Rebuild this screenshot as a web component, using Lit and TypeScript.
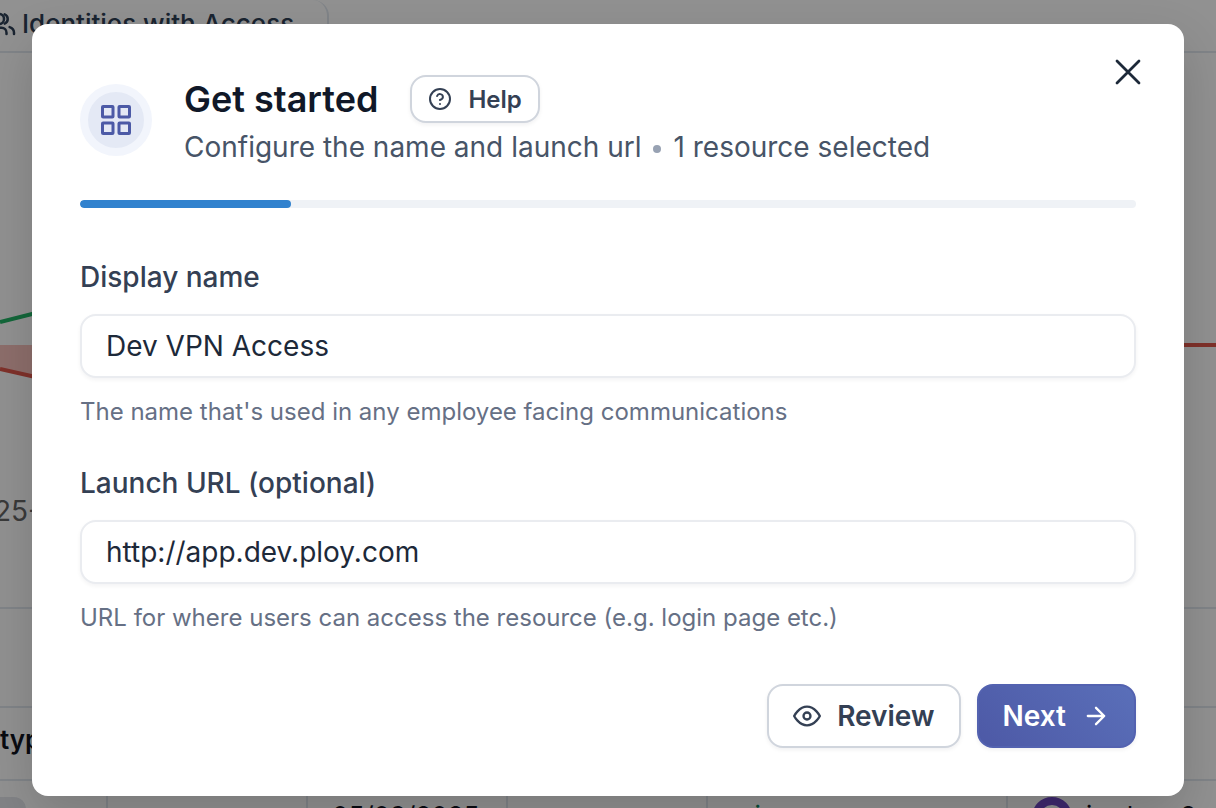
import { LitElement, html, css, svg } from "lit";
import { customElement, state } from "lit/decorators.js";

const icon = (body: unknown, size: number, stroke = 2) => html`<svg
  width=${size}
  height=${size}
  viewBox="0 0 24 24"
  fill="none"
  stroke="currentColor"
  stroke-width=${stroke}
  stroke-linecap="round"
  stroke-linejoin="round"
  overflow="visible"
  aria-hidden="true"
>${body}</svg>`;

const usersIcon = svg`<circle cx="12" cy="8" r="4"/><path d="M16.5 4.300a4 4 0 0 1 0 7.400"/><path d="M5 20v-1a4 4 0 0 1 4-4h5a4 4 0 0 1 4 4v1"/><path d="M20.5 14.500c2 .6 3.500 2.300 3.500 4.500v1"/>`;
const gridIcon = svg`<rect x="3" y="3" width="7" height="7" rx="0.4"/><rect x="14" y="3" width="7" height="7" rx="0.4"/><rect x="14" y="14" width="7" height="7" rx="0.4"/><rect x="3" y="14" width="7" height="7" rx="0.4"/>`;
const helpIcon = svg`<circle cx="12" cy="12" r="10"/><path d="M9.1 9a3 3 0 0 1 5.8 1c0 2-3 3-3 3"/><path d="M12 17h.01"/>`;
const closeIcon = svg`<path d="M18 6 6 18M6 6l12 12"/>`;
const eyeIcon = svg`<path d="M1 12s4-8 11-8 11 8 11 8-4 8-11 8-11-8-11-8z"/><circle cx="12" cy="12" r="3"/>`;
const arrowIcon = svg`<path d="M5 12h14M12 5l7 7-7 7"/>`;

@customElement("app-backdrop")
export class AppBackdrop extends LitElement {
  static styles = css`
    :host {
      display: flex;
      flex-direction: column;
      height: 100%;
      overflow: hidden;
      background: #fff;
      color: #2f4056;
    }
    .tabs {
      display: flex;
      flex: none;
      height: 53px;
      box-sizing: border-box;
      border-bottom: 2px solid #e2e8f0;
    }
    .tab {
      display: flex;
      align-items: center;
      gap: 8px;
      width: 329px;
      height: 51px;
      box-sizing: border-box;
      padding-bottom: 4px;
      border-right: 2px solid #e2e8f0;
      border-top-right-radius: 16px;
      font-size: 26px;
      font-weight: 500;
      white-space: nowrap;
    }
    .tab svg {
      flex: none;
      margin-left: -16px;
    }
    .chart {
      flex: none;
      height: 554px;
      display: flex;
      flex-direction: column;
      border-bottom: 2px solid #e2e8f0;
    }
    .plot {
      display: block;
      width: 100%;
      height: 436px;
    }
    .tick {
      margin-left: -6px;
      font-size: 28px;
      line-height: 44px;
      color: #666;
    }
    .filter {
      flex: none;
      height: 97px;
      border-bottom: 2px solid #e2e8f0;
    }
    .head {
      flex: none;
      height: 71px;
      line-height: 64px;
      border-bottom: 2px solid #e2e8f0;
      font-size: 26px;
      font-weight: 600;
      color: #10141f;
    }
    .row {
      flex: none;
      display: grid;
      grid-template-columns: 108px 200px 200px 200px 300px 1fr;
      height: 72px;
      font-size: 26px;
      line-height: 70px;
      color: #10141f;
    }
    .cell {
      display: flex;
      gap: 14px;
      padding-left: 24px;
      box-sizing: border-box;
      border-right: 2px solid #e2e8f0;
      white-space: nowrap;
    }
    .cell:first-child {
      padding: 0;
    }
    .cell:last-child {
      border: 0;
    }
    .chip {
      width: 26px;
      height: 40px;
      margin-top: 16px;
      border-radius: 0 12px 12px 0;
      background: #e4e7ec;
    }
    .state {
      margin-left: 8px;
      color: #0e8a63;
    }
    .avatar {
      width: 24px;
      height: 24px;
      margin-top: 16px;
      flex: none;
      border: 8px solid #7048c4;
      border-radius: 50%;
    }
  `;

  render() {
    return html`
      <div class="tabs">
        <div class="tab">${icon(usersIcon, 30)}<span>Identities with Access</span></div>
      </div>
      <div class="chart">
        <svg class="plot" viewBox="0 0 1216 436" preserveAspectRatio="none" aria-hidden="true">
          <path d="M0 292H1216L36 324 0 316z" fill="#f8c1bd" />
          <path d="M0 269 40 259" stroke="#22b566" stroke-width="4" fill="none" />
          <path d="M0 316 40 325M1170 292H1216" stroke="#e0564a" stroke-width="4" fill="none" />
        </svg>
        <div class="tick">25-</div>
      </div>
      <div class="filter"></div>
      <div class="head">type</div>
      <div class="row">
        <div class="cell"><span class="chip"></span></div>
        <div class="cell"></div>
        <div class="cell">05/09/2025</div>
        <div class="cell"></div>
        <div class="cell"><span class="state">via</span></div>
        <div class="cell"><span class="avatar"></span><span>jordan+8</span></div>
      </div>
    `;
  }
}

@customElement("app-root")
export class AppRoot extends LitElement {
  static styles = css`
    :host {
      display: block;
      position: relative;
      height: 100vh;
      overflow: hidden;
      font-family: Inter, "Liberation Sans", sans-serif;
      font-optical-sizing: none;
    }
    .overlay {
      position: absolute;
      inset: 0;
      box-sizing: border-box;
      padding: 24px 32px 12px;
      background: rgba(0, 0, 0, 0.43);
    }
    .dialog {
      position: relative;
      box-sizing: border-box;
      padding: 48px;
      border-radius: 16px;
      background: #fff;
      box-shadow: 0 20px 50px rgba(0, 0, 0, 0.16);
    }
    .header {
      display: flex;
      align-items: center;
      gap: 32px;
    }
    .badge {
      display: flex;
      align-items: center;
      justify-content: center;
      width: 56px;
      height: 56px;
      flex: none;
      border: 8px solid #f2f5fc;
      border-radius: 50%;
      background: #e4e9f5;
      color: #4c5aa6;
    }
    .title-row {
      display: flex;
      align-items: center;
      gap: 32px;
      height: 54px;
    }
    h2 {
      margin: 0;
      font-size: 36px;
      line-height: 54px;
      font-weight: 600;
      color: #101828;
    }
    .subtitle {
      display: flex;
      align-items: center;
      gap: 12px;
      margin: 0;
      font-size: 28px;
      line-height: 42px;
      color: #475467;
    }
    .dot {
      width: 8px;
      height: 8px;
      margin-top: 4px;
      border-radius: 50%;
      background: #98a2b3;
    }
    button {
      display: flex;
      align-items: center;
      box-sizing: border-box;
      margin: 0;
      font: inherit;
      font-weight: 600;
      border: 2px solid #d0d5dd;
      border-radius: 16px;
      background: #fff;
      color: #344054;
      box-shadow: 0 2px 4px rgba(16, 24, 40, 0.06);
      cursor: pointer;
    }
    .help {
      gap: 16px;
      height: 48px;
      padding: 0 16px;
      font-size: 24px;
    }
    .close {
      position: absolute;
      top: 26px;
      right: 34px;
      padding: 0;
      border: 0;
      box-shadow: none;
      background: none;
      color: #1d2939;
    }
    .track {
      height: 8px;
      margin-top: 32px;
      border-radius: 4px;
      background: #eff2f6;
      overflow: hidden;
    }
    .bar {
      height: 100%;
      border-radius: 4px;
      background: #3182ce;
    }
    .form {
      display: flex;
      flex-direction: column;
      gap: 32px;
      margin-top: 48px;
    }
    .field {
      display: flex;
      flex-direction: column;
      gap: 16px;
    }
    label {
      font-size: 28px;
      line-height: 42px;
      font-weight: 500;
      color: #344054;
    }
    input {
      width: 100%;
      height: 64px;
      box-sizing: border-box;
      padding: 0 24px;
      border: 2px solid #eaecf0;
      border-radius: 16px;
      font: inherit;
      font-size: 28px;
      color: #1d2939;
      background: #fff;
      outline: none;
      box-shadow: 0 2px 4px rgba(16, 24, 40, 0.05);
    }
    .hint {
      margin: 0;
      font-size: 24px;
      line-height: 36px;
      color: #667085;
    }
    .actions {
      display: flex;
      justify-content: flex-end;
      gap: 16px;
      margin-top: 48px;
    }
    .action {
      gap: 16px;
      height: 64px;
      padding: 0 24px;
      font-size: 28px;
    }
    .next {
      border-color: #5362b0;
      background: linear-gradient(45deg, #4d59a6, #5a6fb9);
      color: #fff;
    }
  `;

  @state() private name = "Dev VPN Access";
  @state() private url = "http://app.dev.ploy.com";
  private progress = 20;

  render() {
    return html`
      <app-backdrop aria-hidden="true"></app-backdrop>
      <div class="overlay">
        <section class="dialog" role="dialog" aria-modal="true" aria-labelledby="title">
          <button class="close" aria-label="Close">${icon(closeIcon, 44, 1.5)}</button>
          <header class="header">
            <div class="badge">${icon(gridIcon, 36)}</div>
            <div>
              <div class="title-row">
                <h2 id="title">Get started</h2>
                <button class="help">${icon(helpIcon, 24)}<span>Help</span></button>
              </div>
              <p class="subtitle">
                <span>Configure the name and launch url</span>
                <span class="dot"></span>
                <span>1 resource selected</span>
              </p>
            </div>
          </header>
          <div class="track"><div class="bar" style="width: ${this.progress}%"></div></div>
          <form class="form" @submit=${(e: Event) => e.preventDefault()}>
            <div class="field">
              <label for="name">Display name</label>
              <input id="name" type="text" .value=${this.name}
                @input=${(e: InputEvent) => (this.name = (e.target as HTMLInputElement).value)} />
              <p class="hint">The name that's used in any employee facing communications</p>
            </div>
            <div class="field">
              <label for="url">Launch URL (optional)</label>
              <input id="url" type="text" .value=${this.url}
                @input=${(e: InputEvent) => (this.url = (e.target as HTMLInputElement).value)} />
              <p class="hint">URL for where users can access the resource (e.g. login page etc.)</p>
            </div>
          </form>
          <div class="actions">
            <button class="action">${icon(eyeIcon, 28)}<span>Review</span></button>
            <button class="action next"><span>Next</span>${icon(arrowIcon, 28)}</button>
          </div>
        </section>
      </div>
    `;
  }
}
